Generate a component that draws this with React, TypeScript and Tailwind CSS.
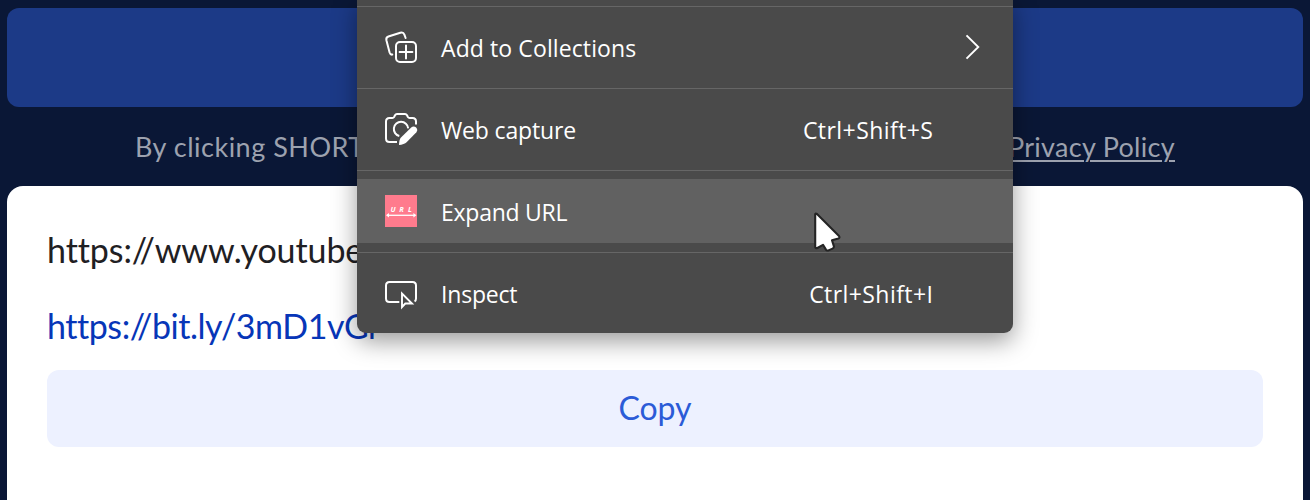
import type { ReactNode } from "react";

function CollectionsIcon() {
  return (
    <svg className="size-[34px]" viewBox="0 0 34 34" fill="none" stroke="white" strokeWidth="2" strokeLinecap="round">
      <path d="M8.3 24.6C6.8 24.8 6 24 5.6 22.6L2.4 10.2C2 8.4 2.7 7.1 4.4 6.5L16.3 2.7C18.3 2.1 19.7 2.8 20.4 4.6L21.6 8" />
      <rect x="12" y="12" width="20" height="20" rx="4" />
      <path d="M22 15.6V28.4M15.6 22H28.4" />
    </svg>
  );
}

function CaptureIcon() {
  return (
    <svg className="size-[34px]" viewBox="0 0 34 34" fill="none" stroke="white" strokeWidth="2">
      <path d="M13 30H5.5Q2 30 2 26.5V9.5Q2 6 5.5 6H8.3Q9.5 6 10.1 5L11 3.3Q11.7 2 13 2H21Q22.3 2 23 3.3L23.9 5Q24.5 6 25.7 6H28.5Q32 6 32 9.5V12.5" />
      <path d="M15.3 24A7.2 7.2 0 1 1 24.2 16.3" />
      <path d="M27.2 15.4C30.5 12.7 35.2 16.8 32.4 20.2L22.6 30.2C21.2 31.6 18.2 32.6 15 33C15.2 29.5 15.6 27.2 17 25.6Z" fill="white" stroke="none" />
    </svg>
  );
}

function UrlIcon() {
  return (
    <svg className="size-8" viewBox="0 0 32 32">
      <rect width="32" height="32" fill="#ff7b8d" />
      <g fill="white" fontFamily="Open Sans, sans-serif" fontSize="7.4" fontWeight="700" fontStyle="italic">
        <text x="5.4" y="17">U</text>
        <text x="14.2" y="17">R</text>
        <text x="23" y="17">L</text>
      </g>
      <path d="M2 20.3H30" stroke="white" strokeWidth="1.3" />
      <path d="M1 20.3L4 18V22.6ZM31.4 20.3L28.4 18V22.6Z" fill="white" />
    </svg>
  );
}

function InspectIcon() {
  return (
    <svg className="size-[34px]" viewBox="0 0 34 34" fill="none" stroke="white" strokeWidth="2">
      <path d="M15.3 26H5.5Q2 26 2 22.5V9.5Q2 6 5.5 6H28.5Q32 6 32 9.5V22.5Q32 24.6 30.6 25.5" />
      <path d="M18 17.6V31L21.3 27.5H28Z" strokeWidth="1.9" strokeLinejoin="miter" />
    </svg>
  );
}

function Pointer() {
  return (
    <svg className="absolute left-[812px] top-[210px] h-[44px] w-[32px]" viewBox="0 0 32 44">
      <path
        d="M3.2 4.2Q3.4 3 5 4L27 26Q28.2 27.8 26.4 28.4L20 30.2L22 36.6Q22 38 20.6 38.6L16.4 40.4Q14.6 40.8 13.8 39.4L11 34.8L5.4 38Q3.4 38.6 3.2 36.8Z"
        fill="white"
        stroke="#242424"
        strokeWidth="2.1"
        strokeLinejoin="round"
      />
    </svg>
  );
}

function Divider() {
  return <div className="mb-2 mt-[9px] h-px bg-[#666666]" />;
}

function MenuItem({ icon, label, hint, active }: { icon: ReactNode; label: ReactNode; hint?: ReactNode; active?: boolean }) {
  return (
    <div className={`flex h-16 items-center ${active ? "bg-[#616161]" : ""}`}>
      <div className="ml-[27px] flex w-[34px] justify-center">{icon}</div>
      <span className="ml-[23px] grow pt-0.5">{label}</span>
      {hint}
    </div>
  );
}

function Shortcut({ children }: { children: string }) {
  return <span className="-mr-[0.4px] pr-20 pt-0.5 tracking-[0.43px]">{children}</span>;
}

export default function App() {
  return (
    <div className="relative h-[500px] w-[1310px] overflow-hidden bg-[#0a1736] px-[7px] pt-2 font-['Lato',sans-serif] [font-variant-ligatures:none]">
      <div className="h-[99px] rounded-xl bg-[#1c3a87]" />
      <div className="flex h-[79px] items-center justify-between pl-32 pr-32 pt-px text-[27px] text-[#9da2af]">
        <span className="tracking-[0.5px]">By clicking SHORTEN</span>
        <span className="tracking-[0.3px] underline decoration-2 underline-offset-[3px]">Privacy Policy</span>
      </div>
      <div className="h-[314px] rounded-t-2xl bg-white px-10 pt-10 text-[34px]">
        <div className="h-[48px] leading-[47px] tracking-[-0.1px] text-[#1f2023]">https://www.youtube</div>
        <div className="mt-7 h-[48px] leading-[47px] tracking-[-0.45px] text-[#0736b8]">https://bit.ly/3mD1vGr</div>
        <div className="mt-5 flex h-[77px] items-center justify-center rounded-xl bg-[#edf1ff] pb-0.5 text-[32px] text-[#2b5bd7]">Copy</div>
      </div>
      <div className="absolute left-[357px] top-[-3px] flow-root h-[336px] w-[656px] rounded-b-[9px] bg-[#4a4a4a] font-['Open_Sans',sans-serif] text-[23px] text-white shadow-[0_8px_24px_rgba(0,0,0,0.4)]">
        <Divider />
        <MenuItem
          icon={<CollectionsIcon />}
          label={<span className="tracking-[0.1px]">Add to Collections</span>}
          hint={
            <svg className="mr-[31px] h-[26px] w-[18px]" viewBox="0 0 18 26" fill="none" stroke="white" strokeWidth="1.9">
              <path d="M2.5 1.3L14.3 13L2.5 24.7" />
            </svg>
          }
        />
        <Divider />
        <MenuItem icon={<CaptureIcon />} label={<span className="tracking-[-0.15px]">Web capture</span>} hint={<Shortcut>Ctrl+Shift+S</Shortcut>} />
        <Divider />
        <MenuItem icon={<UrlIcon />} label={<span className="tracking-[-0.25px]">Expand URL</span>} active />
        <Divider />
        <MenuItem icon={<InspectIcon />} label={<span className="tracking-[-0.2px]">Inspect</span>} hint={<Shortcut>Ctrl+Shift+I</Shortcut>} />
      </div>
      <Pointer />
    </div>
  );
}
